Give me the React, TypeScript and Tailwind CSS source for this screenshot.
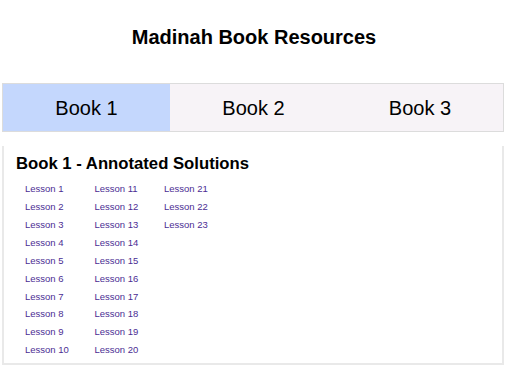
import React from "react";

const col1 = Array.from({ length: 10 }, (_, i) => i + 1);
const col2 = Array.from({ length: 10 }, (_, i) => i + 11);
const col3 = [21, 22, 23];

function Col({ items }: { items: number[] }) {
  return (
    <ul className="flex w-[69.5px] flex-col">
      {items.map((n) => (
        <li key={n} className="flex h-[17.9px] items-center">
          <a href="#" className="text-[9.5px] leading-none text-[#4b2d93]">
            Lesson {n}
          </a>
        </li>
      ))}
    </ul>
  );
}

export default function App() {
  return (
    <div
      className="h-[374px] w-[512px] bg-white text-black"
      style={{ fontFamily: '"Liberation Sans", Arial, sans-serif' }}
    >
      <div className="flex h-[83px] justify-center pl-[2px] pr-[6px] pt-[27px]">
        <h1 className="text-[20px] font-bold leading-none">Madinah Book Resources</h1>
      </div>
      <div className="ml-[2px] flex h-[49px] w-[502px] border border-[#dcdcdc]">
        <div className="flex w-[167px] items-center justify-center bg-[#c4d7fd] text-[20px]">Book 1</div>
        <div className="flex w-[167px] items-center justify-center bg-[#f7f3f7] text-[20px]">Book 2</div>
        <div className="flex flex-1 items-center justify-center bg-[#f7f3f7] text-[20px]">Book 3</div>
      </div>
      <div className="ml-[2px] mt-[14px] h-[219px] w-[502px] border-x-2 border-b-2 border-[#e9e9e9] pl-[12px] pt-[8px]">
        <h2 className="text-[16.7px] font-bold leading-[20px]">Book 1 - Annotated Solutions</h2>
        <div className="mt-[6px] flex pl-[9px]">
          <Col items={col1} />
          <Col items={col2} />
          <Col items={col3} />
        </div>
      </div>
    </div>
  );
}
